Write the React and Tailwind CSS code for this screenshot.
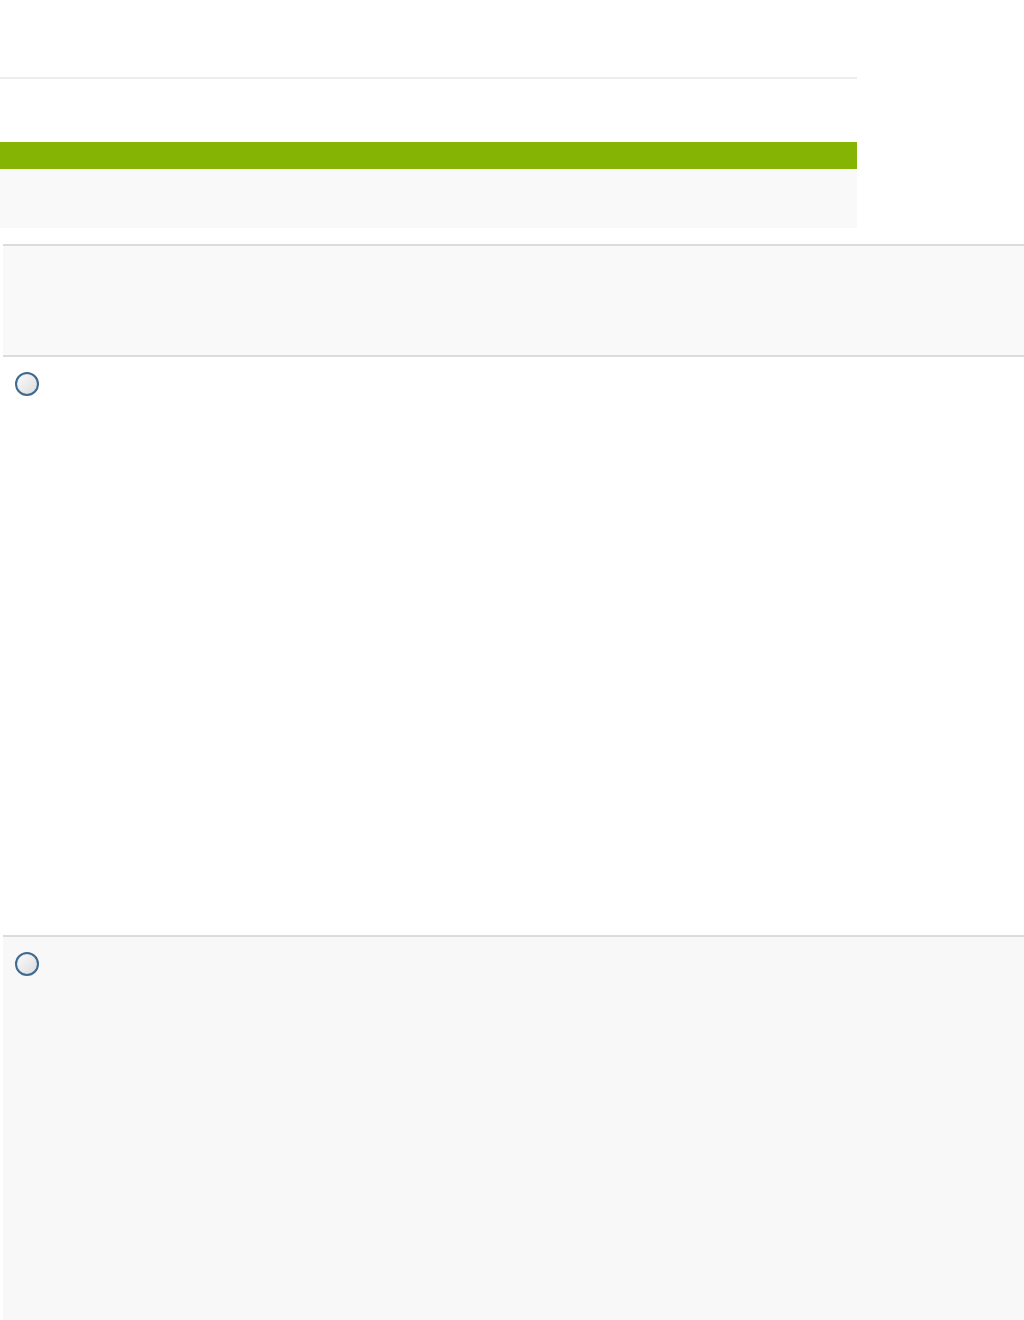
import React from "react";

function Radio() {
  return (
    <div className="w-[24px] h-[24px] rounded-full border-[2.5px] border-[#3d6a93] bg-gradient-to-br from-[#fbfbfb] to-[#dcdcdc] shadow-[inset_0_0_1px_rgba(0,0,0,0.2)]" />
  );
}

export default function App() {
  return (
    <div className="w-[1024px] min-h-[1320px] bg-white font-['Liberation_Sans',sans-serif] flex flex-col">
      <div className="h-[77px]" />
      <div className="w-[857px] h-[2px] bg-[#ececec]" />
      <div className="h-[63px]" />
      <div className="w-[857px] h-[27px] bg-[#86b404]" />
      <div className="w-[857px] h-[59px] bg-[#f9f9f9]" />
      <div className="h-[16px]" />
      <div className="ml-[3px] flex flex-col flex-1">
        <div className="h-[113px] bg-[#f9f9f9] border-t-2 border-b-2 border-[#dcdcdc]" />
        <div className="h-[578px] bg-white pl-[12px] pt-[15px]">
          <Radio />
        </div>
        <div className="flex-1 bg-[#f8f8f8] border-t-2 border-[#dcdcdc] pl-[12px] pt-[15px]">
          <Radio />
        </div>
      </div>
    </div>
  );
}
